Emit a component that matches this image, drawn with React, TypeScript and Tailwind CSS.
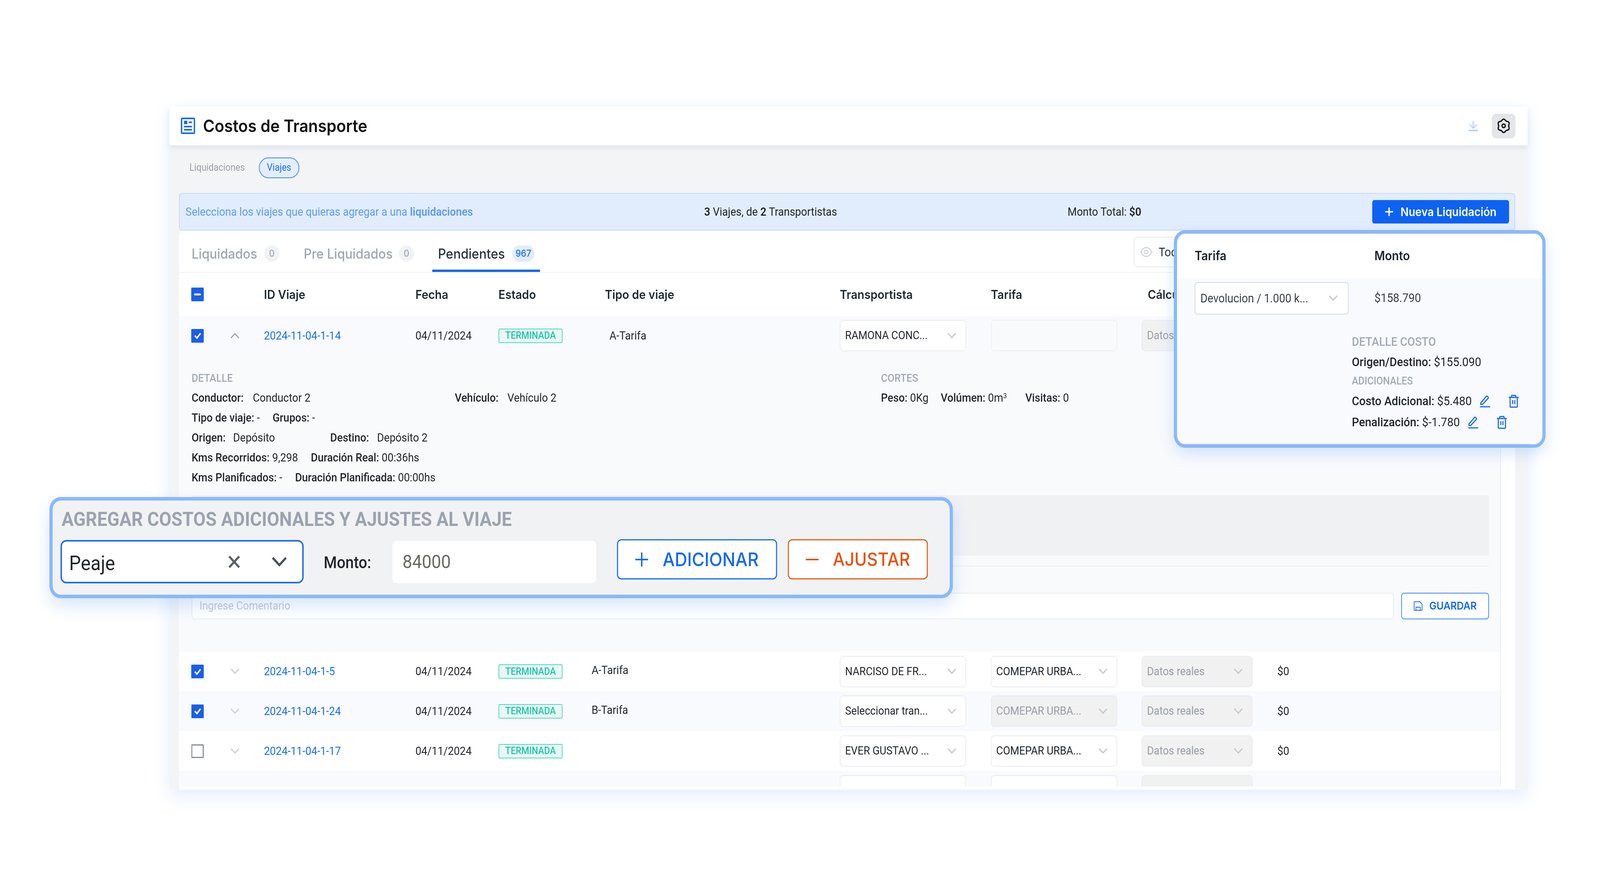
import React from "react";

const head = "font-['Inter',sans-serif]";

function DocIcon() {
  return (
    <svg width="40" height="42" viewBox="0 0 40 42" fill="none">
      <rect x="2" y="2" width="36" height="38" rx="2" stroke="#1468f2" strokeWidth="4" />
      <rect x="9" y="8" width="9" height="9" fill="#1468f2" />
      <rect x="22" y="10" width="9" height="4" fill="#1468f2" />
      <rect x="9" y="21" width="22" height="4" fill="#1468f2" />
      <rect x="9" y="29" width="22" height="4" fill="#1468f2" />
    </svg>
  );
}

function DownloadIcon() {
  return (
    <svg width="28" height="30" viewBox="0 0 28 30" fill="none" stroke="#b5d2fb" strokeWidth="3">
      <path d="M14 2v18M4 12l10 9 10-9" />
      <path d="M1 27h26" strokeWidth="4" />
    </svg>
  );
}

// six lobed cog, same outline as the one in the header
function gearPath() {
  const pts: string[] = [];
  for (let i = 0; i < 72; i++) {
    const a = (i / 72) * Math.PI * 2;
    const r = 15.5 + 1.6 * Math.cos(6 * a);
    pts.push(`${(20 + r * Math.sin(a)).toFixed(2)} ${(20 - r * Math.cos(a)).toFixed(2)}`);
  }
  return `M${pts.join("L")}Z`;
}

function GearIcon() {
  return (
    <svg width="40" height="40" viewBox="0 0 40 40" fill="none" stroke="#0f0f0f" strokeWidth="3.4" strokeLinejoin="round">
      <path d={gearPath()} />
      <circle cx="20" cy="20" r="4.5" />
    </svg>
  );
}

function PenIcon() {
  return (
    <svg width="30" height="34" viewBox="0 0 30 34" fill="none" stroke="#1468f2" strokeWidth="3" strokeLinejoin="round" strokeLinecap="round">
      <path d="M3 25v-4L19 4a1.5 1.5 0 0 1 2 0l3 3a1.5 1.5 0 0 1 0 2L8 25z" />
      <path d="M2 31h26" />
    </svg>
  );
}

function TrashIcon() {
  return (
    <svg width="30" height="34" viewBox="0 0 30 34" fill="none" stroke="#1468f2" strokeWidth="3" strokeLinejoin="round">
      <path d="M1 7h28M5 7v23a2 2 0 0 0 2 2h16a2 2 0 0 0 2-2V7M9 7V3a1 1 0 0 1 1-1h10a1 1 0 0 1 1 1v4" />
      <path d="M12 14v10M18 14v10" />
    </svg>
  );
}

function SaveIcon() {
  return (
    <svg width="26" height="26" viewBox="0 0 26 26" fill="none" stroke="#1468f2" strokeWidth="2" strokeLinejoin="round">
      <path d="M2 3a1 1 0 0 1 1-1h15l6 6v15a1 1 0 0 1-1 1H3a1 1 0 0 1-1-1z" />
      <path d="M7 24v-8h12v8" />
    </svg>
  );
}

function EyeIcon() {
  return (
    <svg width="34" height="30" viewBox="0 0 36 30" fill="none" stroke="#d0d3d8" strokeWidth="3">
      <path d="M2 15C6 7 11 3 18 3s12 4 16 12c-4 8-9 12-16 12S6 23 2 15z" />
      <circle cx="18" cy="15" r="5" />
    </svg>
  );
}

function Chevron({ up = false, color = "#c8cbd0", size = 26 }: { up?: boolean; color?: string; size?: number }) {
  return (
    <svg width={size} height={size * 0.62} viewBox="0 0 26 16" fill="none" stroke={color} strokeWidth="3.4">
      <path d={up ? "M2 14L13 3l11 11" : "M2 2l11 11L24 2"} />
    </svg>
  );
}

function Check({ state }: { state: "on" | "off" | "mixed" }) {
  if (state === "off") {
    return <div className="h-[35px] w-[35px] rounded-[2px] border-[3px] border-[#868b93] bg-white" />;
  }
  return (
    <div className="flex h-[35px] w-[35px] items-center justify-center rounded-[2px] bg-[#1a5fe8]">
      {state === "on" ? (
        <svg width="22" height="18" viewBox="0 0 22 18" fill="none" stroke="white" strokeWidth="4">
          <path d="M3 9l6 6L19 3" />
        </svg>
      ) : (
        <div className="h-[5px] w-[19px] rounded-sm bg-white" />
      )}
    </div>
  );
}

function Select({ text, width, disabled = false, blank = false }: { text?: string; width: string; disabled?: boolean; blank?: boolean }) {
  return (
    <div
      className={`flex h-[80px] items-center justify-between rounded-[10px] border-2 pl-[13px] pr-[25px] text-[29px] ${width} ${
        disabled
          ? "border-[#e9ebef] bg-[#f1f1f2] text-[#9a9ea4]"
          : blank
          ? "border-[#eef0f3] bg-[#f9fafc]"
          : "border-[#e9ebef] bg-white text-[#22262b]"
      }`}
    >
      <span className="whitespace-nowrap">{text}</span>
      {!blank && <Chevron />}
    </div>
  );
}

function Badge() {
  return (
    <div className="flex h-[37px] w-[179px] items-center justify-center rounded-[4px] border-2 border-[#53d6c0] bg-[#e7f8f5] text-[25px] font-medium text-[#1cc4a8]">
      TERMINADA
    </div>
  );
}

const rowGrid = "grid h-full grid-cols-[106px_97px_423px_232px_297px_656px_422px_421px_379px_1fr] items-center pl-[34px]";

function TripRow({
  checked,
  open = false,
  id,
  tipo,
  driver,
  tarifa,
  tarifaDisabled = false,
  shaded = false,
  height,
}: {
  checked: boolean;
  open?: boolean;
  id: string;
  tipo?: string;
  driver: string;
  tarifa?: string;
  tarifaDisabled?: boolean;
  shaded?: boolean;
  height: string;
}) {
  return (
    <div className={`${height} shrink-0 ${shaded ? "bg-[#f9fafd]" : "bg-white"}`}>
      <div className={rowGrid}>
        <Check state={checked ? "on" : "off"} />
        <div className="pl-[3px]">
          <Chevron up={open} color={open ? "#a3a8af" : "#cfd2d7"} />
        </div>
        <a className="text-[29.5px] text-[#1a6cf0]">{id}</a>
        <span className="text-[29.5px] text-[#22262b]">04/11/2024</span>
        <Badge />
        <span className={`text-[29.5px] text-[#22262b] ${open ? "pl-[13px]" : "-ml-[37px] -mt-[6px]"}`}>{tipo}</span>
        <Select text={driver} width="w-[353px]" />
        <Select text={tarifa} width="w-[353px]" disabled={tarifaDisabled} blank={!tarifa} />
        <Select text="Datos reales" width="w-[310px]" disabled />
        <span className="text-[29.5px] text-[#22262b]">{open ? "" : "$0"}</span>
      </div>
    </div>
  );
}

// last row: the card cuts it off, only the tops of its selects show
function CutRow() {
  return (
    <div className="h-[102px] shrink-0 bg-[#f9fafd]">
      <div className={rowGrid}>
        <span />
        <span />
        <span />
        <span />
        <span />
        <span />
        <Select width="w-[353px]" />
        <Select width="w-[353px]" />
        <Select width="w-[310px]" disabled />
        <span />
      </div>
    </div>
  );
}

function B({ children }: { children: React.ReactNode }) {
  return <span className="font-medium text-[#1f2429]">{children}</span>;
}

function DetailLine({ children }: { children: React.ReactNode }) {
  return <div className="flex h-[51px] items-center whitespace-nowrap text-[29.5px] text-[#22262b]">{children}</div>;
}

function Detail() {
  return (
    <div className="flex h-[759px] shrink-0 flex-col bg-[#f9fafc] pl-[35px] pr-[31px] pt-[33px]">
      <div className="flex">
        <div className="w-[1925px]">
          <DetailLine>
            <span className="text-[28px] font-medium text-[#a2a9b4]">DETALLE</span>
          </DetailLine>
          <DetailLine>
            <span className="w-[171px]"><B>Conductor:</B></span>
            <span className="w-[564px]">Conductor 2</span>
            <span className="w-[147px]"><B>Vehículo:</B></span>
            <span>Vehículo 2</span>
          </DetailLine>
          <DetailLine>
            <span className="w-[226px]"><B>Tipo de viaje:</B> -</span>
            <span><B>Grupos:</B> -</span>
          </DetailLine>
          <DetailLine>
            <span className="w-[116px]"><B>Origen:</B></span>
            <span className="w-[271px]">Depósito</span>
            <span className="w-[131px]"><B>Destino:</B></span>
            <span>Depósito 2</span>
          </DetailLine>
          <DetailLine>
            <span className="w-[333px]"><B>Kms Recorridos:</B> 9,298</span>
            <span><B>Duración Real:</B> 00:36hs</span>
          </DetailLine>
          <DetailLine>
            <span className="w-[289px]"><B>Kms Planificados:</B> -</span>
            <span><B>Duración Planificada:</B> 00:00hs</span>
          </DetailLine>
        </div>
        <div>
          <DetailLine>
            <span className="text-[28px] font-medium text-[#a2a9b4]">CORTES</span>
          </DetailLine>
          <DetailLine>
            <span className="w-[167px]"><B>Peso:</B> 0Kg</span>
            <span className="w-[236px]">
              <B>Volúmen:</B> 0m<sup className="text-[18px]">3</sup>
            </span>
            <span><B>Visitas:</B> 0</span>
          </DetailLine>
        </div>
      </div>
      <div className="mt-[20px] h-[154px] shrink-0 rounded-[4px] bg-[#f0f1f3]" />
      <div className="mt-[26px] border-t-2 border-[#eceef1]" />
      <div className="mt-[67px] flex h-[68px] justify-between">
        <div className="flex w-[3357px] items-center rounded-[8px] border-2 border-[#e9ebef] bg-white pl-[20px] text-[29px] text-[#c4c8ce]">
          Ingrese Comentario
        </div>
        <button type="button" className={`flex w-[245px] items-center justify-center gap-[18px] rounded-[8px] border-2 border-[#3e88f6] bg-white text-[27px] font-semibold text-[#1468f2] ${head}`}>
          <SaveIcon />
          GUARDAR
        </button>
      </div>
    </div>
  );
}

function TarifaPanel() {
  return (
    <div className="absolute left-[3278px] top-[589px] h-[557px] w-[1038px] overflow-hidden rounded-[32px] border-[9px] border-[#8ab8fa] bg-white shadow-[0_16px_40px_rgba(59,130,246,0.2)]">
      <div className={`flex h-[113px] items-center pl-[49px] text-[32px] font-semibold text-[#1c242b] ${head}`}>
        <span className="w-[502px]">Tarifa</span>
        <span>Monto</span>
      </div>
      <div className="h-[426px] bg-[#f8fafd]">
        <div className="flex h-[105px] items-center pl-[49px]">
          <div className="flex h-[83px] w-[430px] items-center justify-between rounded-[8px] border-2 border-[#d5d8dd] bg-white pl-[14px] pr-[28px] text-[30.5px] text-[#3a3f45]">
            Devolucion / 1.000 k...
            <Chevron />
          </div>
          <span className="ml-[72px] text-[31px] text-[#3a3f45]">$158.790</span>
        </div>
        <div className="pl-[488px] pt-[34px] text-[31.5px] text-[#22262b]">
          <div className="flex h-[50px] items-center text-[31px] font-medium text-[#a2a9b4]">DETALLE COSTO</div>
          <div className="flex h-[54px] items-center"><B>Origen/Destino:</B>&nbsp;$155.090</div>
          <div className="flex h-[42px] items-center text-[27px] font-medium text-[#a2a9b4]">ADICIONALES</div>
          <div className="mt-[4px] flex h-[54px] items-center">
            <B>Costo Adicional:</B>&nbsp;$5.480
            <span className="ml-[22px]"><PenIcon /></span>
            <span className="ml-[50px]"><TrashIcon /></span>
          </div>
          <div className="flex h-[54px] items-center">
            <B>Penalización:</B>&nbsp;$-1.780
            <span className="ml-[22px]"><PenIcon /></span>
            <span className="ml-[50px]"><TrashIcon /></span>
          </div>
        </div>
        <div className="mr-[37px] mt-[27px] h-[2px] bg-[#e3e6ea]" />
      </div>
    </div>
  );
}

function CostPanel() {
  return (
    <div className="absolute left-[138px] top-[1272px] h-[259px] w-[2523px] rounded-[32px] border-[9px] border-[#8ab8fa] bg-[#f1f2f4] pl-[22px] pt-[24px] shadow-[0_20px_44px_rgba(59,130,246,0.2)]">
      <div className="ml-[3px] h-[48px] text-[50px] font-bold leading-[48px] text-[#9aa3af]">AGREGAR COSTOS ADICIONALES Y AJUSTES AL VIAJE</div>
      <div className="mt-[29px] flex items-start">
        <div className="flex h-[111px] w-[679px] items-center justify-between rounded-[16px] border-4 border-[#1a6cf0] bg-white pl-[20px] pr-[42px] text-[52px] text-[#22262b]">
          <span className="pt-[8px]">Peaje</span>
          <span className="flex items-center gap-[87px]">
            <svg width="34" height="34" viewBox="0 0 34 34" fill="none" stroke="#5c6269" strokeWidth="6">
              <path d="M3 3l28 28M31 3L3 31" />
            </svg>
            <Chevron color="#4a5058" size={44} />
          </span>
        </div>
        <span className="ml-[56px] mt-[26px] w-[192px] text-[42px] font-medium text-[#1f2429]">Monto:</span>
        <div className="mt-[2px] flex h-[108px] w-[569px] items-center rounded-[12px] bg-white pl-[28px] text-[48px] text-[#6a6864]">84000</div>
        <button type="button" className={`-mt-[2px] ml-[58px] flex h-[103px] w-[447px] items-center justify-center gap-[40px] rounded-[12px] border-[3px] border-[#1a6cf0] bg-white text-[48px] font-medium text-[#1468f2] ${head}`}>
          <svg width="36" height="36" viewBox="0 0 36 36" stroke="#1468f2" strokeWidth="4"><path d="M18 0v36M0 18h36" /></svg>
          ADICIONAR
        </button>
        <button type="button" className={`-mt-[2px] ml-[30px] flex h-[103px] w-[391px] items-center justify-center gap-[40px] rounded-[12px] border-[3px] border-[#e2601c] bg-white text-[47px] font-medium text-[#e0540f] ${head}`}>
          <svg width="36" height="36" viewBox="0 0 36 36" stroke="#e0540f" strokeWidth="4"><path d="M0 18h36" /></svg>
          AJUSTAR
        </button>
      </div>
    </div>
  );
}

export default function App() {
  // the window can be narrower than the 4468px design, fit the width to it
  const fit = Math.min(1, window.innerWidth / 4468);
  return (
    <div className="h-[2288px] w-full overflow-hidden bg-white">
      <div className="relative h-[2288px] w-[4468px] origin-top-left font-['Roboto',sans-serif]" style={{ transform: `scaleX(${fit})` }}>
        <div className="absolute left-[473px] top-[272px] flex h-[1749px] w-[3793px] flex-col bg-[#f3f4f6] shadow-[0_16px_44px_rgba(59,130,246,0.14)]">
          <header className="z-10 flex h-[100px] shrink-0 items-center justify-between bg-white pl-[32px] pr-[34px] shadow-[0_6px_14px_rgba(90,120,200,0.14)]">
            <div className="flex items-center gap-[22px]">
              <DocIcon />
              <h1 className={`text-[44px] font-semibold text-[#111] ${head}`}>Costos de Transporte</h1>
            </div>
            <div className="flex items-center gap-[38px]">
              <DownloadIcon />
              <div className="flex h-[63px] w-[66px] items-center justify-center rounded-[12px] bg-[#e3e5e9]">
                <GearIcon />
              </div>
            </div>
          </header>

          <div className="flex h-[122px] shrink-0 items-center gap-[39px] pb-[8px] pl-[56px] text-[25px]">
            <span className="text-[#9a9fa6]">Liquidaciones</span>
            <span className="flex h-[53px] w-[113px] items-center justify-center rounded-full border-2 border-[#3e88f6] bg-[#e3eefc] text-[#1a6cf0]">Viajes</span>
          </div>

          <div className="ml-[27px] mr-[35px] flex h-[96px] shrink-0 items-center rounded-[8px] border-2 border-[#c3daf8] bg-[#e1edfc] pl-[16px] pr-[15px] text-[29.5px]">
            <span className="w-[1449px] text-[#5c9cf5]">
              Selecciona los viajes que quieras agregar a una <b className="font-semibold">liquidaciones</b>
            </span>
            <span className="w-[1015px] text-[#1d2126]">
              <b className="font-semibold">3</b> Viajes, de <b className="font-semibold">2</b> Transportistas
            </span>
            <span className="w-[851px] text-[#1d2126]">
              Monto Total: <b className="font-semibold">$0</b>
            </span>
            <button type="button" className={`flex h-[60px] w-[382px] shrink-0 items-center justify-center gap-[20px] rounded-[6px] bg-[#0d62f2] text-[30px] font-semibold text-white ${head}`}>
              <svg width="24" height="24" viewBox="0 0 26 26" stroke="white" strokeWidth="4"><path d="M13 1v24M1 13h24" /></svg>
              Nueva Liquidación
            </button>
          </div>

          <main className="ml-[27px] mr-[35px] flex min-h-0 flex-1 flex-col overflow-hidden rounded-t-[12px] bg-white">
            <div className={`flex h-[108px] shrink-0 items-end border-b-2 border-[#f1f2f4] pl-[35px] text-[35px] font-medium leading-[42px] ${head}`}>
              <div className="flex h-[80px] w-[313px] items-start pt-[12px] text-[#a0a6b0]">
                <span className="w-[203px]">Liquidados</span>
                <span className="flex h-[42px] w-[42px] items-center justify-center rounded-full bg-[#f1f2f4] text-[24px]">0</span>
              </div>
              <div className="flex h-[80px] w-[359px] items-start pt-[12px] text-[#a0a6b0]">
                <span className="w-[266px]">Pre Liquidados</span>
                <span className="flex h-[42px] w-[42px] items-center justify-center rounded-full bg-[#f1f2f4] text-[24px]">0</span>
              </div>
              <div className="flex h-[80px] w-[301px] items-start border-b-[6px] border-[#1468f2] pl-[16px] pt-[12px] text-[#2a323a]">
                <span className="w-[207px]">Pendientes</span>
                <span className="flex h-[42px] w-[63px] items-center justify-center rounded-full bg-[#e1edfc] text-[24px] text-[#1a6cf0]">967</span>
              </div>
              <div className="mb-[12px] ml-auto mr-[765px] flex h-[78px] w-[300px] items-center gap-[17px] rounded-[10px] border-2 border-[#e9ebef] pl-[16px] text-[30px] font-normal text-[#1f2429]">
                <EyeIcon />
                Todos
              </div>
            </div>

            <div className="flex min-h-0 flex-1 flex-col">
              <div className={`h-[111px] shrink-0 text-[31.5px] font-semibold text-[#1e2a33] ${head}`}>
                <div className={rowGrid}>
                  <Check state="mixed" />
                  <span />
                  <span>ID Viaje</span>
                  <span>Fecha</span>
                  <span>Estado</span>
                  <span>Tipo de viaje</span>
                  <span>Transportista</span>
                  <span>Tarifa</span>
                  <span className="pl-[17px]">Cálculo</span>
                  <span />
                </div>
              </div>
              <div className="min-h-0 w-[3691px] flex-1 overflow-hidden border-r-2 border-[#e9ebef]">
                <TripRow checked open id="2024-11-04-1-14" tipo="A-Tarifa" driver="RAMONA CONC..." shaded height="h-[100px]" />
                <Detail />
                <TripRow checked id="2024-11-04-1-5" tipo="A-Tarifa" driver="NARCISO DE FR..." tarifa="COMEPAR URBA..." height="h-[101px]" />
                <TripRow checked id="2024-11-04-1-24" tipo="B-Tarifa" driver="Seleccionar tran..." tarifa="COMEPAR URBA..." tarifaDisabled shaded height="h-[102px]" />
                <TripRow checked={false} id="2024-11-04-1-17" driver="EVER GUSTAVO ..." tarifa="COMEPAR URBA..." height="h-[102px]" />
                <CutRow />
              </div>
              <div className="h-[8px] shrink-0 bg-white" />
            </div>
          </main>
        </div>

        <TarifaPanel />
        <CostPanel />
      </div>
    </div>
  );
}
